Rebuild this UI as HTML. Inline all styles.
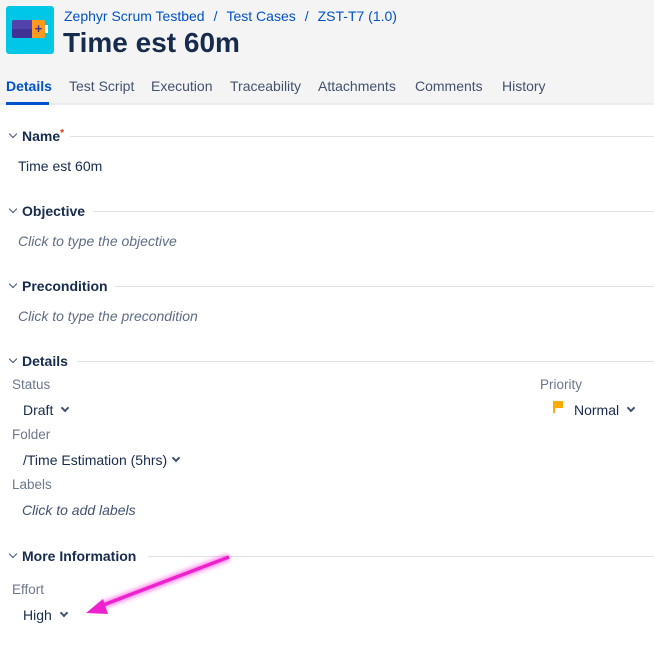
<!DOCTYPE html><html><head><style>
body{margin:0;width:654px;height:651px;background:#fff;font-family:"Liberation Sans",sans-serif;color:#172b4d;position:relative;overflow:hidden}
.a{position:absolute;white-space:nowrap}
.hdr{position:absolute;left:0;top:0;width:654px;height:103px;background:#f4f4f4;border-bottom:2px solid #ebecf0}
.bc{font-size:14px;color:#0052cc;top:8px;left:64px}
.tab{top:78px;font-size:14px;color:#42526e}
.sec{font-size:14px;font-weight:bold;color:#172b4d}
.line{position:absolute;height:1px;background:#dfe1e6;right:0}
.lbl{font-size:13.5px;color:#6b778c}
.val{font-size:14px;color:#172b4d}
.it{font-size:14px;font-style:italic;color:#5e6c84}
.chev{position:absolute;width:5px;height:5px;border-right:1.5px solid #42526e;border-bottom:1.5px solid #42526e;transform:rotate(45deg)}
.dd{position:absolute;width:4px;height:4px;border-right:2px solid #42526e;border-bottom:2px solid #42526e;transform:rotate(45deg)}
</style></head><body>
<div class="hdr"></div>
<div class="a" style="left:6px;top:6px;width:48px;height:48px;background:#00c7e6;border-radius:3px"></div>
<div class="a" style="left:12px;top:20px;width:20px;height:9px;background:#5243aa;border-radius:2px 0 0 0"></div>
<div class="a" style="left:12px;top:29px;width:20px;height:9px;background:#403294;border-radius:0 0 0 2px"></div>
<div class="a" style="left:32px;top:20px;width:13px;height:18px;background:#ff991f;border-radius:0 2px 2px 0;color:#403294;font-size:13px;font-weight:bold;text-align:center;line-height:18px">+</div>
<div class="a" style="left:45px;top:25px;width:3px;height:8px;background:#fff"></div>
<div class="a bc">Zephyr Scrum Testbed<span style="margin:0 9px">/</span>Test Cases<span style="margin:0 9px">/</span>ZST-T7 (1.0)</div>
<div class="a" style="left:63px;top:27px;font-size:28px;font-weight:bold;color:#172b4d">Time est 60m</div>
<div class="a tab" style="left:6px;color:#0052cc;font-weight:bold">Details</div>
<div class="a" style="left:6px;top:102px;width:43px;height:3px;background:#0052cc"></div>
<div class="a tab" style="left:69px">Test Script</div>
<div class="a tab" style="left:151px">Execution</div>
<div class="a tab" style="left:230px">Traceability</div>
<div class="a tab" style="left:318px">Attachments</div>
<div class="a tab" style="left:415px">Comments</div>
<div class="a tab" style="left:502px">History</div>

<div class="chev" style="left:10px;top:131px"></div>
<div class="a sec" style="left:22px;top:128px">Name<span style="color:#de350b;font-size:10px;vertical-align:top">*</span></div>
<div class="line" style="left:70px;top:136px"></div>
<div class="a val" style="left:18px;top:158px">Time est 60m</div>

<div class="chev" style="left:10px;top:206px"></div>
<div class="a sec" style="left:22px;top:203px">Objective</div>
<div class="line" style="left:93px;top:211px"></div>
<div class="a it" style="left:18px;top:233px">Click to type the objective</div>

<div class="chev" style="left:10px;top:281px"></div>
<div class="a sec" style="left:22px;top:278px">Precondition</div>
<div class="line" style="left:115px;top:286px"></div>
<div class="a it" style="left:18px;top:308px">Click to type the precondition</div>

<div class="chev" style="left:10px;top:356px"></div>
<div class="a sec" style="left:22px;top:353px">Details</div>
<div class="line" style="left:77px;top:361px"></div>
<div class="a lbl" style="left:12px;top:377px">Status</div>
<div class="a val" style="left:23px;top:402px">Draft</div><div class="dd" style="left:62px;top:405px"></div>
<div class="a lbl" style="left:540px;top:377px">Priority</div>
<div class="a" style="left:553px;top:401px;width:2px;height:12px;background:#ffab00"></div>
<div class="a" style="left:555px;top:401px;width:8px;height:7px;background:#ffab00"></div>
<div class="a val" style="left:574px;top:402px">Normal</div><div class="dd" style="left:628px;top:405px"></div>
<div class="a lbl" style="left:12px;top:427px">Folder</div>
<div class="a val" style="left:23px;top:452px">/Time Estimation (5hrs)</div><div class="dd" style="left:173px;top:455px"></div>
<div class="a lbl" style="left:12px;top:477px">Labels</div>
<div class="a it" style="left:22px;top:502px;color:#42526e">Click to add labels</div>

<div class="chev" style="left:10px;top:551px"></div>
<div class="a sec" style="left:22px;top:548px">More Information</div>
<div class="line" style="left:148px;top:556px"></div>
<div class="a lbl" style="left:12px;top:582px">Effort</div>
<div class="a val" style="left:23px;top:607px">High</div><div class="dd" style="left:61px;top:610px"></div>

<svg class="a" style="left:0;top:0" width="654" height="651">
<defs><filter id="g"><feGaussianBlur stdDeviation="2"/></filter></defs>
<line x1="229" y1="557" x2="98" y2="607" stroke="#ff33dd" stroke-width="7" filter="url(#g)" opacity=".6"/>
<line x1="229" y1="557" x2="98" y2="607" stroke="#ee22cc" stroke-width="3.5"/>
<polygon points="86,613 103,599 108,614" fill="#ee22cc"/>
</svg>
</body></html>
